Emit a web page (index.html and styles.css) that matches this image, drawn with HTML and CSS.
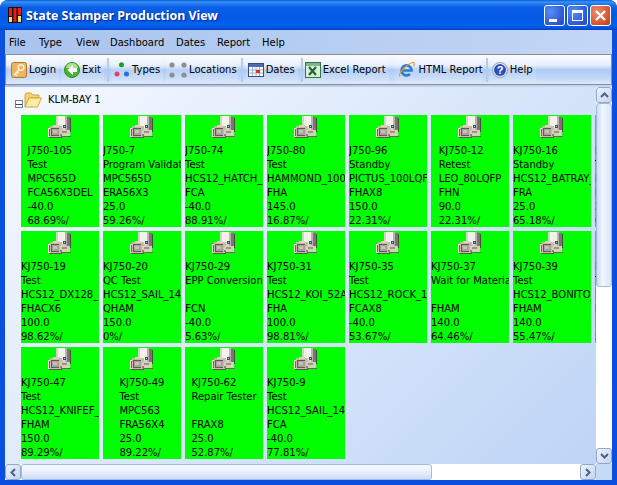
FILE: index.html
```html
<!DOCTYPE html>
<html lang="en">
<head>
    <meta name="viewport" content="width=device-width, initial-scale=1.0">
    <link rel="stylesheet" href="styles.css">
    <title>State Stamper Production View</title>
</head>

<body>
    <svg class="defs" width="0" height="0">
        <symbol id="stamper" viewBox="0 0 24 23">
            <rect x="8" y="0" width="11" height="15" fill="#d6d2c8"/>
            <rect x="10" y="0" width="7" height="12" fill="#f2f1ea"/>
            <rect x="17" y="0" width="2" height="15" fill="#b9b5aa"/>
            <rect x="19" y="1" width="3" height="16" fill="#7a766b"/>
            <rect x="22" y="2" width="1" height="14" fill="#4c4a44"/>
            <rect x="15" y="9" width="3" height="3" fill="#34506e"/>
            <rect x="16" y="10" width="1" height="1" fill="#b9cde0"/>
            <rect x="2" y="10" width="12" height="12" fill="#c8bca6"/>
            <rect x="5" y="9" width="6" height="2" fill="#ddd5c4"/>
            <rect x="3" y="12" width="8" height="8" fill="#5e5b55"/>
            <rect x="4" y="13" width="7" height="6" fill="#a8a49c"/>
            <rect x="5" y="14" width="4" height="3" fill="#c4c1b8"/>
            <rect x="0" y="12" width="2" height="9" fill="#ebe7dc"/>
            <rect x="1" y="13" width="1" height="7" fill="#6e6a60"/>
            <rect x="12" y="14" width="10" height="6" fill="#d8cfbb"/>
            <rect x="14" y="15" width="5" height="2" fill="#9c9484"/>
            <rect x="12" y="18" width="2" height="2" fill="#8c8272"/>
            <rect x="13" y="20" width="10" height="1" fill="#6a6459"/>
            <rect x="1" y="21" width="13" height="1" fill="#5a5650"/>
        </symbol>
        <symbol id="folder" viewBox="0 0 18 17">
            <path d="M1 16V4l1-2h5l2 2h6v3H5L1 16z" fill="#f6d272" stroke="#cfa648"/>
            <path d="M1 16L5 7h12.500l-4 9H1z" fill="#fdeca4" stroke="#cfa648"/>
        </symbol>
    </svg>

    <div class="window">
        <div class="titlebar">
            <svg class="app-icon" width="14" height="16" viewBox="0 0 14 16">
                <rect x="0" y="0" width="14" height="16" rx="1" fill="#1a1010"/>
                <rect x="1" y="1" width="3" height="8" fill="#e8201c"/>
                <rect x="1" y="10" width="3" height="5" fill="#efe37a"/>
                <rect x="5.500" y="1" width="3" height="14" fill="#e8201c"/>
                <rect x="10" y="1" width="3" height="7" fill="#e8201c"/>
                <rect x="10" y="9" width="3" height="6" fill="#efe37a"/>
            </svg>
            <span class="title">State Stamper Production View</span>
            <div class="caption-btn"><span class="min-glyph"></span></div>
            <div class="caption-btn"><span class="max-glyph"></span></div>
            <div class="caption-btn close">
                <svg width="13" height="13" viewBox="0 0 13 13"><path d="M2 2l9 9M11 2l-9 9" stroke="#fff" stroke-width="2.400"/></svg>
            </div>
        </div>

        <div class="client">
            <div class="menubar">
                <span class="menu-file">File</span>
                <span class="menu-type">Type</span>
                <span class="menu-view">View</span>
                <span class="menu-dashboard">Dashboard</span>
                <span class="menu-dates">Dates</span>
                <span class="menu-report">Report</span>
                <span>Help</span>
            </div>

            <div class="toolbar">
                <div class="tool tool-login">
                    <svg width="16" height="16" viewBox="0 0 16 16">
                        <rect x="0.500" y="0.500" width="15" height="15" rx="2" fill="#eeb45e" stroke="#b8782a"/>
                        <circle cx="10" cy="5.500" r="2.800" fill="none" stroke="#fff2d4" stroke-width="1.600"/>
                        <path d="M8 8L3 13M4 12l2 2M6 10l1.500 1.500" stroke="#fff2d4" stroke-width="1.500" fill="none"/>
                    </svg>
                    Login
                </div>
                <div class="tool tool-exit">
                    <svg width="16" height="16" viewBox="0 0 16 16">
                        <circle cx="8" cy="8" r="7.500" fill="#4cb52e" stroke="#2f8a1c"/>
                        <path d="M2 6a6 5 0 0 1 12 0z" fill="#a6e48c"/>
                        <path d="M9 3L3.500 8 9 13v-3h4V6H9z" fill="#fff"/>
                    </svg>
                    Exit
                </div>
                <div class="sep"></div>
                <div class="tool tool-types">
                    <svg width="16" height="16" viewBox="0 0 16 16">
                        <circle cx="7.500" cy="2.800" r="2.500" fill="#1ea01e"/>
                        <circle cx="3" cy="12" r="2.500" fill="#e0406a"/>
                        <circle cx="12.500" cy="12" r="2.500" fill="#2c6ae0"/>
                    </svg>
                    Types
                </div>
                <div class="tool tool-locations">
                    <svg width="18" height="16" viewBox="0 0 18 16">
                        <circle cx="3" cy="3" r="2.600" fill="#8f8f8f"/>
                        <circle cx="15" cy="3" r="2.600" fill="#8f8f8f"/>
                        <circle cx="3" cy="13" r="2.600" fill="#8f8f8f"/>
                        <circle cx="15" cy="13" r="2.600" fill="#8f8f8f"/>
                    </svg>
                    Locations
                </div>
                <div class="sep"></div>
                <div class="tool tool-dates">
                    <svg width="16" height="16" viewBox="0 0 16 16">
                        <rect x="0.500" y="1.500" width="15" height="13" fill="#fff" stroke="#36508a"/>
                        <rect x="1" y="2" width="14" height="3" fill="#4a6cb4"/>
                        <path d="M1 8h14M1 11h14M4.500 5v9M8 5v9M11.500 5v9" stroke="#9cb0d8"/>
                        <rect x="8" y="8" width="4" height="3" fill="#e0301c"/>
                    </svg>
                    Dates
                </div>
                <div class="sep sep-tight"></div>
                <div class="tool tool-excel">
                    <svg width="16" height="16" viewBox="0 0 16 16">
                        <rect x="0.500" y="0.500" width="15" height="15" fill="#dcefd8" stroke="#2f7a3a"/>
                        <rect x="1" y="1" width="14" height="3" fill="#7fb98a"/>
                        <path d="M4 5l7 8M11 5l-7 8" stroke="#1d6b2c" stroke-width="2.200"/>
                    </svg>
                    Excel Report
                </div>
                <div class="tool tool-html">
                    <svg width="17" height="17" viewBox="0 0 17 17">
                        <path d="M4 9.500h9.500A5 5 0 1 0 12 13" fill="none" stroke="#2b7bd9" stroke-width="2.600"/>
                        <path d="M2 15.500C0 12 9 3 15 1.500c1.800-.400 1.500 2.500.500 4" fill="none" stroke="#dca028" stroke-width="1.200"/>
                    </svg>
                    HTML Report
                </div>
                <div class="sep"></div>
                <div class="tool tool-help">
                    <svg width="16" height="16" viewBox="0 0 16 16">
                        <circle cx="8" cy="8" r="7.500" fill="#e8eef8" stroke="#8ea0c0"/>
                        <circle cx="8" cy="8" r="6" fill="#2a50b8"/>
                        <text class="help-q" x="8" y="12" text-anchor="middle">?</text>
                    </svg>
                    Help
                </div>
            </div>

            <div class="content">
                <div class="tree">
                    <div class="node">
                        <span class="minus"></span>
                        <svg class="folder" width="18" height="17"><use href="#folder"/></svg>
                        <span class="node-label">KLM-BAY 1</span>
                    </div>
                    <div class="tiles">
                        <div class="tile"><svg class="stamper"><use href="#stamper"/></svg><div class="info">J750-105<br>Test<br>MPC565D<br>FCA56X3DEL<br>-40.0<br>68.69%/</div></div>
                        <div class="tile"><svg class="stamper"><use href="#stamper"/></svg><div class="info">J750-7<br>Program Validation<br>MPC565D<br>ERA56X3<br>25.0<br>59.26%/</div></div>
                        <div class="tile"><svg class="stamper"><use href="#stamper"/></svg><div class="info">J750-74<br>Test<br>HCS12_HATCH_112<br>FCA<br>-40.0<br>88.91%/</div></div>
                        <div class="tile"><svg class="stamper"><use href="#stamper"/></svg><div class="info">J750-80<br>Test<br>HAMMOND_100LQFP<br>FHA<br>145.0<br>16.87%/</div></div>
                        <div class="tile"><svg class="stamper"><use href="#stamper"/></svg><div class="info">J750-96<br>Standby<br>PICTUS_100LQFP<br>FHAX8<br>150.0<br>22.31%/</div></div>
                        <div class="tile"><svg class="stamper"><use href="#stamper"/></svg><div class="info">KJ750-12<br>Retest<br>LEO_80LQFP<br>FHN<br>90.0<br>22.31%/</div></div>
                        <div class="tile"><svg class="stamper"><use href="#stamper"/></svg><div class="info">KJ750-16<br>Standby<br>HCS12_BATRAY_80<br>FRA<br>25.0<br>65.18%/</div></div>
                        <div class="tile"><svg class="stamper"><use href="#stamper"/></svg><div class="info">KJ750-18<br>Test<br>HCS12_BATRAY_80<br>FRA<br>25.0<br>65.18%/</div></div>

                        <div class="tile"><svg class="stamper"><use href="#stamper"/></svg><div class="info">KJ750-19<br>Test<br>HCS12_DX128_80<br>FHACX6<br>100.0<br>98.62%/</div></div>
                        <div class="tile"><svg class="stamper"><use href="#stamper"/></svg><div class="info">KJ750-20<br>QC Test<br>HCS12_SAIL_14<br>QHAM<br>150.0<br>0%/</div></div>
                        <div class="tile"><svg class="stamper"><use href="#stamper"/></svg><div class="info">KJ750-29<br>EPP Conversion<br>&nbsp;<br>FCN<br>-40.0<br>5.63%/</div></div>
                        <div class="tile"><svg class="stamper"><use href="#stamper"/></svg><div class="info">KJ750-31<br>Test<br>HCS12_KOI_52A<br>FHA<br>100.0<br>98.81%/</div></div>
                        <div class="tile"><svg class="stamper"><use href="#stamper"/></svg><div class="info">KJ750-35<br>Test<br>HCS12_ROCK_14<br>FCAX8<br>-40.0<br>53.67%/</div></div>
                        <div class="tile"><svg class="stamper"><use href="#stamper"/></svg><div class="info">KJ750-37<br>Wait for Materials<br>&nbsp;<br>FHAM<br>140.0<br>64.46%/</div></div>
                        <div class="tile"><svg class="stamper"><use href="#stamper"/></svg><div class="info">KJ750-39<br>Test<br>HCS12_BONITO_80<br>FHAM<br>140.0<br>55.47%/</div></div>
                        <div class="tile"><svg class="stamper"><use href="#stamper"/></svg><div class="info">KJ750-41<br>Test<br>HCS12_BONITO_80<br>FHAM<br>140.0<br>55.47%/</div></div>

                        <div class="tile"><svg class="stamper"><use href="#stamper"/></svg><div class="info">KJ750-47<br>Test<br>HCS12_KNIFEF_80<br>FHAM<br>150.0<br>89.29%/</div></div>
                        <div class="tile"><svg class="stamper"><use href="#stamper"/></svg><div class="info">KJ750-49<br>Test<br>MPC563<br>FRA56X4<br>25.0<br>89.22%/</div></div>
                        <div class="tile"><svg class="stamper"><use href="#stamper"/></svg><div class="info">KJ750-62<br>Repair Tester<br>&nbsp;<br>FRAX8<br>25.0<br>52.87%/</div></div>
                        <div class="tile"><svg class="stamper"><use href="#stamper"/></svg><div class="info">KJ750-9<br>Test<br>HCS12_SAIL_14<br>FCA<br>-40.0<br>77.81%/</div></div>
                    </div>
                    <div class="node">
                        <svg class="folder next-folder" width="18" height="17"><use href="#folder"/></svg>
                    </div>
                </div>

                <div class="vscroll">
                    <div class="sb-btn">
                        <svg width="9" height="6" viewBox="0 0 9 6"><path d="M1 5l3.500-3.500L8 5" fill="none" stroke="#4d6185" stroke-width="2"/></svg>
                    </div>
                    <div class="vthumb"></div>
                    <div class="sb-btn">
                        <svg width="9" height="6" viewBox="0 0 9 6"><path d="M1 1l3.500 3.500L8 1" fill="none" stroke="#4d6185" stroke-width="2"/></svg>
                    </div>
                </div>

                <div class="hscroll">
                    <div class="sb-btn">
                        <svg width="6" height="9" viewBox="0 0 6 9"><path d="M5 1L1.500 4.500 5 8" fill="none" stroke="#4d6185" stroke-width="2"/></svg>
                    </div>
                    <div class="hthumb"></div>
                    <div class="sb-btn">
                        <svg width="6" height="9" viewBox="0 0 6 9"><path d="M1 1l3.500 3.500L1 8" fill="none" stroke="#4d6185" stroke-width="2"/></svg>
                    </div>
                </div>
                <div class="corner"></div>
            </div>
        </div>
    </div>
</body>

</html>
```
FILE: styles.css
```css
body {
    margin: 0;
    padding: 0;
    font-family: "DejaVu Sans", sans-serif;
    font-size: 10px;
    color: black;
    background-color: #fff;
}

.defs {
    position: absolute;
}

.window {
    width: 617px;
    height: 485px;
    display: flex;
    flex-direction: column;
    overflow: hidden;
    background-color: #0a4fdf;
    border-radius: 8px 8px 0 0;
}

.titlebar {
    height: 30px;
    flex: none;
    display: flex;
    align-items: center;
    padding: 0 6px 0 8px;
    box-sizing: border-box;
    background: linear-gradient(#0a5be0 0, #3b94f5 2px, #1f78f0 4px, #0a5ee8 8px, #0358e4 18px, #0462ee 25px, #0452de 28px, #0340c8 30px);
}

.app-icon {
    margin-right: 4px;
}

.title {
    flex: 1;
    font-family: "Noto Sans", sans-serif;
    font-weight: bold;
    font-size: 12.4px;
    color: white;
    text-shadow: 1px 1px 1px #0a2a90;
}

.caption-btn {
    width: 21px;
    height: 21px;
    box-sizing: border-box;
    margin-left: 2px;
    border: 1px solid #fff;
    border-radius: 3px;
    background: radial-gradient(circle at 30% 30%, #5b8cf5, #2a58d8 70%, #2248c0);
    display: flex;
    align-items: center;
    justify-content: center;
}

.close {
    background: radial-gradient(circle at 30% 30%, #ec8a6c, #d8512c 70%, #b83a18);
}

.min-glyph {
    width: 8px;
    height: 3px;
    background-color: white;
    margin: 10px 3px 0 0;
}

.max-glyph {
    width: 11px;
    height: 11px;
    box-sizing: border-box;
    border: 1px solid white;
    border-top-width: 3px;
}

.client {
    flex: 1;
    margin: 0 5px 5px 5px;
    display: flex;
    flex-direction: column;
    min-height: 0;
    background: linear-gradient(100deg, #a8c3ee, #c6d9f6);
}

.menubar {
    height: 24px;
    flex: none;
    display: flex;
    align-items: center;
    padding-left: 4px;
}

.menu-file {
    width: 30px;
}

.menu-type {
    width: 37px;
}

.menu-view {
    width: 34px;
}

.menu-dashboard {
    width: 66px;
}

.menu-dates {
    width: 41px;
}

.menu-report {
    width: 45px;
}

.toolbar {
    height: 31px;
    flex: none;
    display: flex;
    align-items: center;
    box-sizing: border-box;
    border: 1px solid #8c8c8c;
    background: linear-gradient(#fbfcff 0, #e6eefc 10px, #adc9f4 15px, #c4d9f8 24px, #dfeafb 29px);
    padding-left: 2px;
    margin-bottom: 2px;
}

.tool {
    display: flex;
    align-items: center;
    gap: 2px;
    height: 24px;
    padding: 0 3px;
    white-space: nowrap;
    background-color: rgba(255, 255, 255, 0.14);
}

.tool-exit {
    margin-left: 2px;
}

.tool-locations {
    margin-left: 3px;
    padding-right: 1px;
}

.tool-excel {
    padding-left: 2px;
}

.tool-html {
    margin-left: 6px;
    padding-right: 0;
    gap: 4px;
}

.tool-help {
    padding-left: 2px;
}

.help-q {
    font-family: "Liberation Sans", sans-serif;
    font-size: 11px;
    font-weight: bold;
    fill: #fff;
}

.sep {
    width: 2px;
    height: 24px;
    margin: 0 2px 0 3px;
    background-color: #b4cbef;
}

.sep-tight {
    margin-right: 0;
}

.content {
    flex: 1;
    min-height: 0;
    display: grid;
    grid-template-columns: 1fr 16px;
    grid-template-rows: 1fr 16px;
    background: linear-gradient(135deg, #f6f9ff, #bcd4f6);
}

.tree {
    overflow: hidden;
    min-width: 0;
}

.node {
    display: flex;
    align-items: center;
    height: 17px;
    padding-left: 10px;
    margin-top: 4px;
}

.minus {
    width: 8px;
    height: 8px;
    flex: none;
    box-sizing: border-box;
    border: 1px solid #6a7fa8;
    background: linear-gradient(#fff 3px, #444 3px, #444 4px, #fff 4px);
    margin-top: 9px;
    margin-right: 1px;
}

.folder {
    flex: none;
}

.next-folder {
    margin-left: 9px;
}

.node-label {
    margin-left: 6px;
    margin-top: -1px;
}

.tiles {
    display: grid;
    grid-template-columns: repeat(8, 78px);
    gap: 4px;
    padding-left: 16px;
    margin-top: 7px;
}

.tile {
    width: 78px;
    height: 112px;
    overflow: hidden;
    background-color: #00ff00;
    text-align: center;
    white-space: nowrap;
}

.stamper {
    display: block;
    width: 24px;
    height: 23px;
    margin: 1px auto 5px auto;
}

.info {
    display: inline-block;
    text-align: left;
    line-height: 14px;
}

.vscroll {
    display: flex;
    flex-direction: column;
    background-color: #fff;
}

.hscroll {
    display: flex;
    background-color: #fff;
}

.sb-btn {
    width: 16px;
    height: 16px;
    flex: none;
    box-sizing: border-box;
    border: 1px solid #93a8c8;
    border-radius: 3px;
    background: linear-gradient(135deg, #eef3fd, #c3d4f2);
    display: flex;
    align-items: center;
    justify-content: center;
}

.vthumb {
    height: 184px;
    flex: none;
    box-sizing: border-box;
    border: 1px solid #a6bbd8;
    border-radius: 3px;
    background: linear-gradient(90deg, #c9dafa, #f2f6fe 40%, #dbe6fa);
    margin-bottom: auto;
}

.hthumb {
    width: 411px;
    flex: none;
    box-sizing: border-box;
    border: 1px solid #a6bbd8;
    border-radius: 3px;
    background: linear-gradient(#f2f6fe, #f2f6fe 30%, #cddcf8);
    margin-right: auto;
}

.corner {
    background-color: #c6d9f6;
}
```
